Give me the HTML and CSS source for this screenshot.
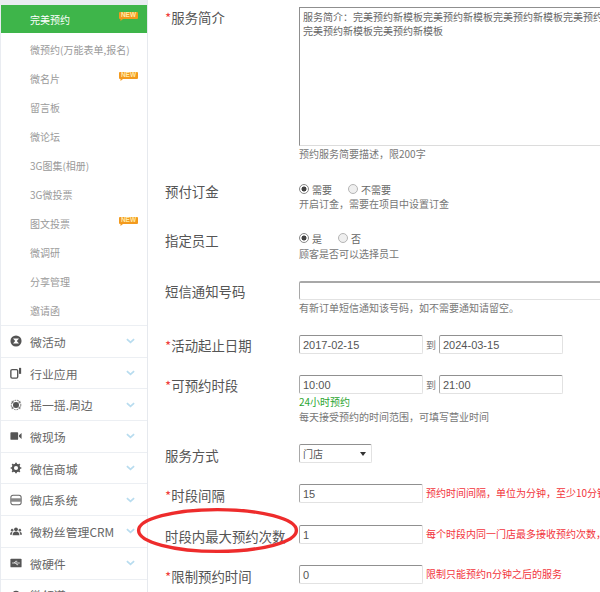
FILE: index.html
```html
<!DOCTYPE html>
<html lang="zh-CN">
<head>
<meta charset="utf-8">
<title>完美预约</title>
<link rel="stylesheet" href="styles.css">
</head>
<body>
<svg class="sprite" width="0" height="0" aria-hidden="true">
  <symbol id="chev" viewBox="0 0 10 6"><path d="M1 1l4 3.6L9 1" fill="none" stroke="#b8dcef" stroke-width="1.9"/></symbol>
  <symbol id="new" viewBox="0 0 19 9"><path d="M1 0h17a1 1 0 0 1 1 1v5a1 1 0 0 1-1 1H4L1.500 9V7H1a1 1 0 0 1-1-1V1a1 1 0 0 1 1-1z" fill="#f39a1e"/></symbol>
</svg>
<div class="app">
  <nav class="side">
    <a class="sub sub-on"><span>完美预约</span><i class="new"><svg><use href="#new"/></svg><b>NEW</b></i></a>
    <div class="sublist">
      <a class="sub"><span>微预约(万能表单,报名)</span></a>
      <a class="sub"><span>微名片</span><i class="new"><svg><use href="#new"/></svg><b>NEW</b></i></a>
      <a class="sub"><span>留言板</span></a>
      <a class="sub"><span>微论坛</span></a>
      <a class="sub"><span>3G图集(相册)</span></a>
      <a class="sub"><span>3G微投票</span></a>
      <a class="sub"><span>图文投票</span><i class="new"><svg><use href="#new"/></svg><b>NEW</b></i></a>
      <a class="sub"><span>微调研</span></a>
      <a class="sub"><span>分享管理</span></a>
      <a class="sub"><span>邀请函</span></a>
    </div>
    <a class="sec">
      <svg class="ico" viewBox="0 0 14 14"><circle cx="7" cy="7" r="6.500" fill="#555"/><path d="M3.500 4h7L8 7l2.500 3h-7L6 7z" fill="#fff"/></svg>
      <span>微活动</span><svg class="chev"><use href="#chev"/></svg>
    </a>
    <a class="sec">
      <svg class="ico" viewBox="0 0 14 14"><rect x="1" y="3" width="8" height="10" rx="1.500" fill="none" stroke="#555" stroke-width="1.600"/><path d="M10.500 1H13v7h-2.500z" fill="#555"/></svg>
      <span>行业应用</span><svg class="chev"><use href="#chev"/></svg>
    </a>
    <a class="sec">
      <svg class="ico" viewBox="0 0 14 14"><circle cx="7" cy="7" r="3.500" fill="#555"/><path d="M2 2l2 1v2H2zM12 2v3h-2V3zM2 12V9h2v2zM12 12l-2-1V9h2z" fill="#777"/><circle cx="7" cy="7" r="5.600" fill="none" stroke="#888" stroke-width="1.200" stroke-dasharray="2 1"/></svg>
      <span>摇一摇.周边</span><svg class="chev"><use href="#chev"/></svg>
    </a>
    <a class="sec">
      <svg class="ico" viewBox="0 0 14 14"><rect x="0.500" y="2.500" width="9" height="9" rx="1" fill="#555"/><path d="M10.500 6l3-2.500v7l-3-2.500z" fill="#555"/></svg>
      <span>微现场</span><svg class="chev"><use href="#chev"/></svg>
    </a>
    <a class="sec">
      <svg class="ico" viewBox="0 0 14 14"><circle cx="7" cy="7" r="3.700" fill="none" stroke="#555" stroke-width="2.600"/><path d="M7 .8v2M7 11.200v2M.8 7h2M11.200 7h2M2.600 2.600L4 4M10 10l1.400 1.400M11.400 2.600L10 4M4 10l-1.400 1.400" stroke="#555" stroke-width="2"/></svg>
      <span>微信商城</span><svg class="chev"><use href="#chev"/></svg>
    </a>
    <a class="sec">
      <svg class="ico" viewBox="0 0 14 14"><rect x="1" y="1.500" width="12" height="11" rx="2.500" fill="none" stroke="#666" stroke-width="1.200"/><rect x="1" y="5" width="12" height="4" fill="#888"/></svg>
      <span>微店系统</span><svg class="chev"><use href="#chev"/></svg>
    </a>
    <a class="sec">
      <svg class="ico" viewBox="0 0 14 14"><circle cx="7" cy="5" r="2.200" fill="#555"/><path d="M3 12c0-3 1.500-4.500 4-4.500S11 9 11 12z" fill="#555"/><circle cx="2.500" cy="6" r="1.500" fill="#666"/><circle cx="11.500" cy="6" r="1.500" fill="#666"/><path d="M0 11.500C0 9.500 1 8 2.800 8L2.200 11.500zM14 11.500C14 9.500 13 8 11.200 8l.6 3.500z" fill="#666"/></svg>
      <span>微粉丝管理CRM</span><svg class="chev"><use href="#chev"/></svg>
    </a>
    <a class="sec">
      <svg class="ico" viewBox="0 0 14 14"><rect x="0.500" y="2" width="13" height="10" rx="1" fill="#555"/><path d="M2.500 7h9M5 7l1.500-2h2M6.500 7L8 9h1.500" stroke="#fff" stroke-width=".9" fill="none"/></svg>
      <span>微硬件</span><svg class="chev"><use href="#chev"/></svg>
    </a>
    <a class="sec">
      <svg class="ico" viewBox="0 0 14 14"><circle cx="7" cy="7" r="5" fill="#555"/></svg>
      <span>微领道</span><svg class="chev"><use href="#chev"/></svg>
    </a>
  </nav>

  <main class="main">
    <form class="form">
      <div class="label"><em>*</em>服务简介</div>
      <div class="field">
        <textarea class="area" wrap="off">服务简介：完美预约新模板完美预约新模板完美预约新模板完美预约新模板完美预约新模板
完美预约新模板完美预约新模板</textarea>
        <p class="hint hint-area">预约服务简要描述，限200字</p>
      </div>

      <div class="label">预付订金</div>
      <div class="field">
        <div class="radios">
          <label class="radio"><i class="dot dot-on"></i>需要</label>
          <label class="radio"><i class="dot"></i>不需要</label>
        </div>
        <p class="hint hint-a">开启订金，需要在项目中设置订金</p>
      </div>

      <div class="label">指定员工</div>
      <div class="field">
        <div class="radios">
          <label class="radio"><i class="dot dot-on"></i>是</label>
          <label class="radio"><i class="dot"></i>否</label>
        </div>
        <p class="hint">顾客是否可以选择员工</p>
      </div>

      <div class="label">短信通知号码</div>
      <div class="field">
        <div class="input input-long"></div>
        <p class="hint">有新订单短信通知该号码，如不需要通知请留空。</p>
      </div>

      <div class="label"><em>*</em>活动起止日期</div>
      <div class="field line">
        <div class="input">2017-02-15</div><span class="to">到</span><div class="input">2024-03-15</div>
      </div>

      <div class="label"><em>*</em>可预约时段</div>
      <div class="field">
        <div class="line">
          <div class="input">10:00</div><span class="to">到</span><div class="input">21:00</div>
        </div>
        <p class="hint hint-green">24小时预约</p>
        <p class="hint hint-a">每天接受预约的时间范围，可填写营业时间</p>
      </div>

      <div class="label label-low">服务方式</div>
      <div class="field">
        <div class="input select">门店<i class="caret"></i></div>
      </div>

      <div class="label label-low"><em>*</em>时段间隔</div>
      <div class="field line">
        <div class="input">15</div><span class="note">预约时间间隔，单位为分钟，至少10分钟</span>
      </div>

      <div class="label label-low">时段内最大预约次数</div>
      <div class="field line">
        <div class="input">1</div><span class="note">每个时段内同一门店最多接收预约次数，默认为1次</span>
      </div>

      <div class="label label-low"><em>*</em>限制预约时间</div>
      <div class="field line">
        <div class="input">0</div><span class="note">限制只能预约n分钟之后的服务</span>
      </div>
    </form>
  </main>
  <svg class="ring" viewBox="0 0 164 48" aria-hidden="true"><ellipse cx="81.500" cy="23.500" rx="78.900" ry="20.900" fill="none" stroke="#ee2c2c" stroke-width="3.400"/></svg>
</div>
</body>
</html>
```
FILE: styles.css
```css
* { box-sizing: border-box; }
html, body { margin: 0; height: 592px; overflow: hidden; background: #fff; }
body { font-family: "Noto Sans CJK SC", "Liberation Sans", sans-serif; color: #555; }
.sprite { position: absolute; }

.app { position: relative; display: flex; width: 600px; height: 592px; overflow: hidden; }

.side {
  flex: 0 0 148px;
  padding: 5px 0 0 1px;
  background: #fff;
  border-right: 1px solid #e6e9ee;
  box-shadow: inset 0 5px 0 #e9ecf1, inset 1px 0 0 #e9ecf1;
  overflow: hidden;
}
.sublist { padding-top: 2px; }
.sub {
  display: flex;
  align-items: center;
  justify-content: space-between;
  height: 29px;
  padding: 0 9px 0 29px;
  font-size: 10px;
  color: #9a9a9a;
  white-space: nowrap;
}
.sub-on { height: 28px; background: #3eb54a; color: #fff; }
.new { position: relative; display: block; width: 19px; height: 9px; margin-top: -5px; }
.new svg { display: block; width: 19px; height: 9px; }
.new b {
  position: absolute;
  left: 0; top: -1px;
  width: 19px;
  text-align: center;
  font: bold 6.500px/8px "Liberation Sans", sans-serif;
  color: #ffe9a8;
}
.sec {
  display: flex;
  align-items: center;
  height: 31.7px;
  padding: 0 12px 0 9px;
  border-top: 1px solid #eceff3;
  font-size: 11.900px;
  color: #666;
  white-space: nowrap;
}
.ico { flex: 0 0 12px; width: 12px; height: 12px; margin-right: 8px; }
.sec span { flex: 1; }
.chev { flex: 0 0 9px; width: 9px; height: 6px; }

.main { flex: 1; min-width: 0; overflow: hidden; }
.form {
  display: grid;
  grid-template-columns: 134px 420px;
  grid-template-rows: 174px 49px 51px 54px 40px 69px 40px 41px 40px 27px;
  padding: 7px 0 0 17px;
}
.label { font-size: 13.400px; line-height: 20px; color: #555; white-space: nowrap; }
.label-low { line-height: 22px; }
.label em { font-style: normal; color: #f03a3a; }
.field { min-width: 0; font-size: 10px; }
.line { display: flex; align-items: flex-start; }

.area {
  display: block;
  width: 420px;
  height: 139px;
  padding: 2px 3px;
  border: 1px solid;
  border-color: #8f8f8f #dcdcdc #dcdcdc #8f8f8f;
  border-radius: 0;
  outline: 0;
  resize: none;
  overflow: hidden;
  font: 10px/14px "Noto Sans CJK SC", sans-serif;
  color: #666;
  background: #fff;
}
.hint { margin: 0; font-size: 10px; line-height: 16px; color: #777; white-space: nowrap; }
.hint-a { line-height: 14px; }
.hint-area { line-height: 15px; }
.hint-green { color: #2ba52f; }

.radios { display: flex; gap: 16px; height: 16px; align-items: center; }
.radio { display: flex; align-items: center; gap: 3px; font-size: 10px; color: #666; }
.dot {
  display: block;
  width: 10px;
  height: 10px;
  border-radius: 50%;
  border: 1px solid #b5b5b5;
  background: #efefef;
}
.dot-on { background: radial-gradient(circle, #444 0 2.200px, #fff 2.800px); border-color: #8a8a8a; }

.input {
  flex: 0 0 124px;
  width: 124px;
  height: 19px;
  padding: 0 3px;
  border: 1px solid #e2e2e2;
  border-top: 1px solid #909090;
  border-left: 1px solid #a8a8a8;
  border-radius: 2px;
  font: 11px/18px "Liberation Sans", sans-serif;
  color: #555;
  background: #fff;
}
.input-long { width: 420px; border-top: 2px solid #a8a8a8; }
.to { width: 16px; text-align: center; font-size: 10px; line-height: 19px; color: #777; }
.note { margin-left: 3px; font-size: 10px; line-height: 18px; color: #f2343c; white-space: nowrap; }
.select {
  display: flex;
  align-items: center;
  justify-content: space-between;
  width: 73px;
  font: 10px/18px "Noto Sans CJK SC", sans-serif;
  padding-right: 5px;
}
.caret {
  width: 0; height: 0;
  border-left: 3px solid transparent;
  border-right: 3px solid transparent;
  border-top: 4px solid #333;
}
.ring { position: absolute; left: 136px; top: 507px; width: 164px; height: 48px; }
```
